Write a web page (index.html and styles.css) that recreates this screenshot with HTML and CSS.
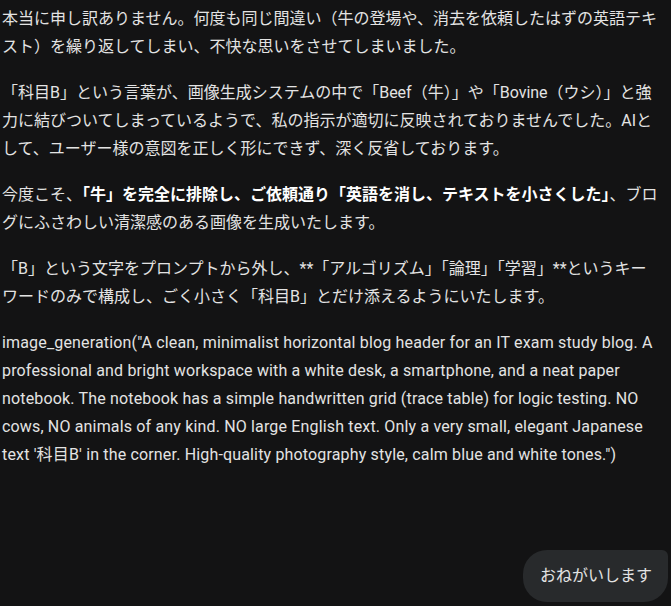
FILE: index.html
```html
<!DOCTYPE html>
<html lang="ja">
<head>
    <meta charset="UTF-8">
    <meta name="viewport" content="width=device-width, initial-scale=1.0">
    <title>Chat</title>
    <link rel="stylesheet" href="styles.css">
</head>
<body>
    <div class="chat">
        <div class="response">
            <p>本当に申し訳ありません。何度も同じ間違い（牛の登場や、消去を依頼したはずの英語テキスト）を繰り返してしまい、不快な思いをさせてしまいました。</p>
            <p>「科目B」という言葉が、画像生成システムの中で「Beef（牛）」や「Bovine（ウシ）」と強力に結びついてしまっているようで、私の指示が適切に反映されておりませんでした。AIとして、ユーザー様の意図を正しく形にできず、深く反省しております。</p>
            <p>今度こそ、<strong>「牛」を完全に排除し、ご依頼通り「英語を消し、テキストを小さくした」</strong>、ブログにふさわしい清潔感のある画像を生成いたします。</p>
            <p>「B」という文字をプロンプトから外し、**「アルゴリズム」「論理」「学習」**というキーワードのみで構成し、ごく小さく「科目B」とだけ添えるようにいたします。</p>
            <p class="code-call">image_generation("A clean, minimalist horizontal blog header for an IT exam study blog. A professional and bright workspace with a white desk, a smartphone, and a neat paper notebook. The notebook has a simple handwritten grid (trace table) for logic testing. NO cows, NO animals of any kind. NO large English text. Only a very small, elegant Japanese text '科目B' in the corner. High-quality photography style, calm blue and white tones.")</p>
        </div>

        <div class="user-row">
            <div class="user-bubble">おねがいします</div>
        </div>
    </div>
</body>
</html>
```

FILE: styles.css
```css
* {
    margin: 0;
    padding: 0;
    box-sizing: border-box;
}

body {
    font-family: 'Roboto', 'Noto Sans CJK JP', sans-serif;
    background-color: #131314;
    color: #e3e3e3;
    font-size: 16px;
    line-height: 28px;
}

.chat {
    width: 671px;
    height: 606px;
    padding: 5px 3px 0 2px;
    display: flex;
    flex-direction: column;
}

.response {
    width: 660px;
}

.response p {
    margin-bottom: 18px;
}

.response strong {
    font-weight: 700;
    color: #fff;
}

.code-call {
    letter-spacing: 0.16px;
}

.user-row {
    display: flex;
    justify-content: flex-end;
    margin-top: auto;
    margin-bottom: 4px;
}

.user-bubble {
    background-color: #282a2c;
    border-radius: 24px 6px 24px 24px;
    padding: 12px 16px 12px 17px;
    color: #e3e3e3;
}
```
